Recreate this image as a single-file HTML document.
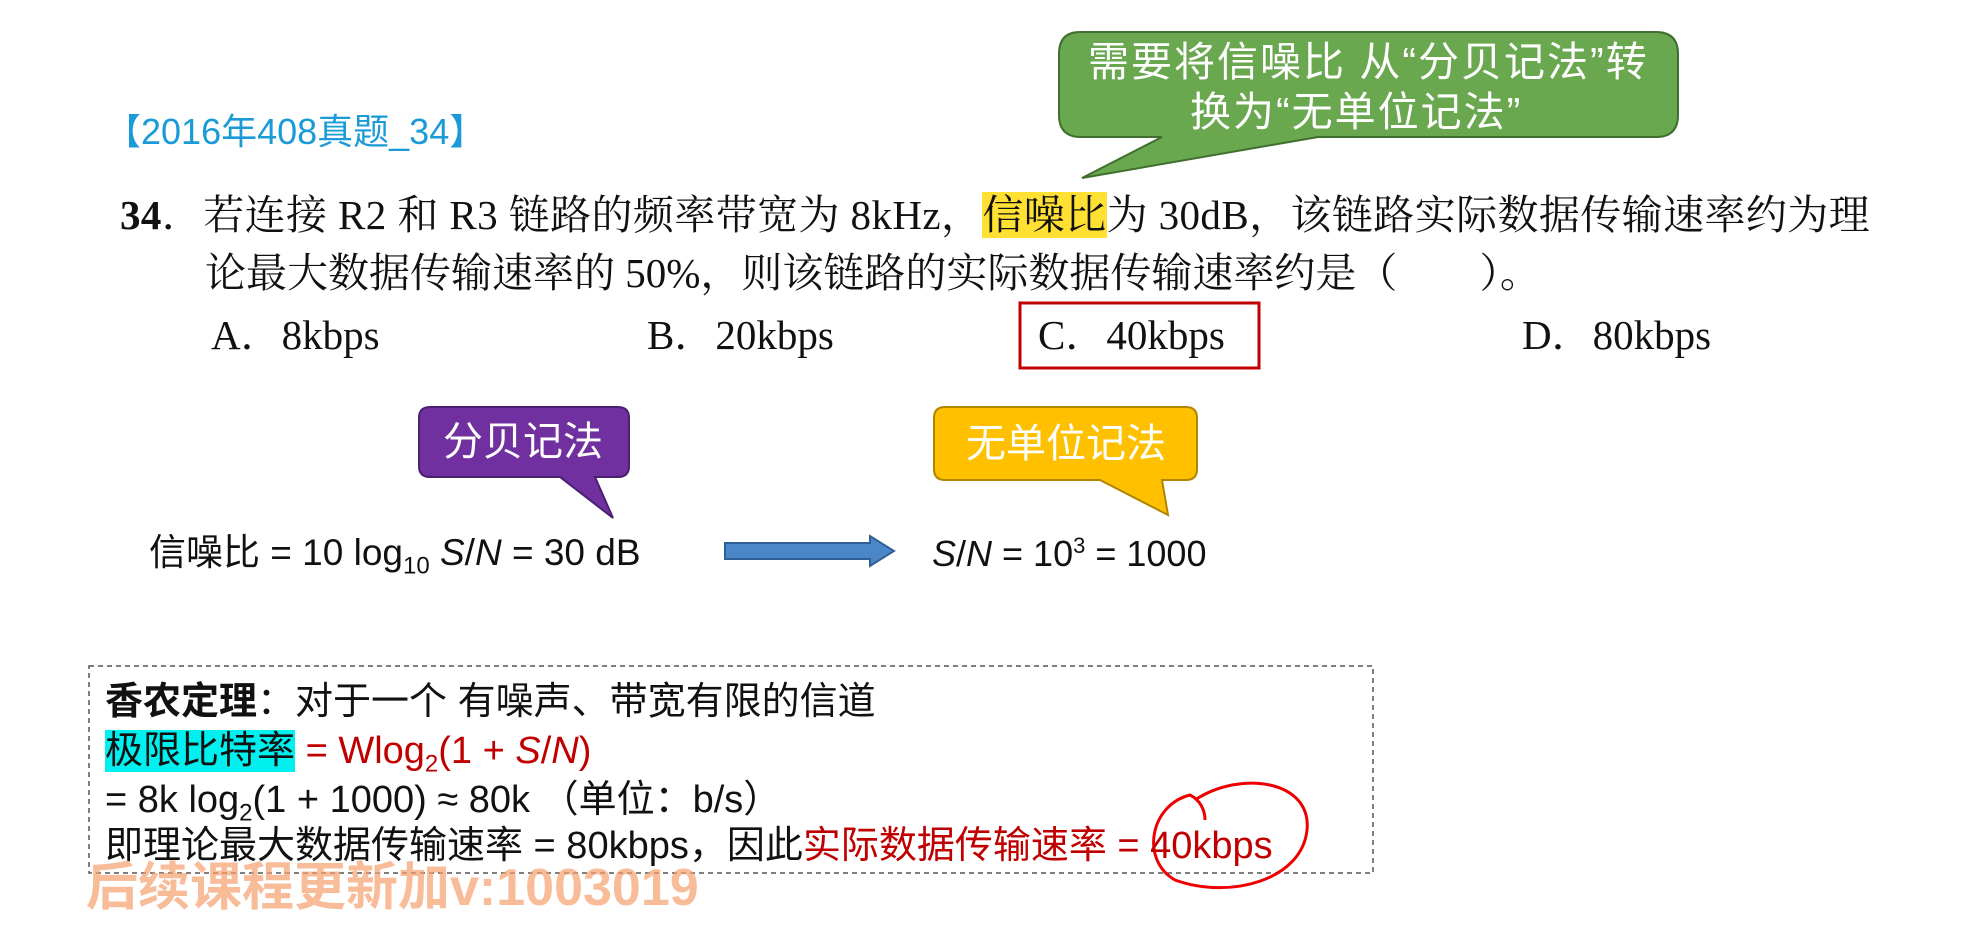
<!DOCTYPE html>
<html><head><meta charset="utf-8"><style>
body{margin:0;width:1981px;height:939px;background:#fff;position:relative;overflow:hidden}
.a{position:absolute;white-space:nowrap;line-height:1}
.q{font-family:"Liberation Serif","Noto Serif CJK SC",serif;font-size:41px;color:#111}
.s{font-family:"Liberation Sans","Noto Sans CJK SC",sans-serif;font-size:38px;color:#111}
.r{color:#c00000}
</style></head><body>
<svg class="a" style="left:0;top:0" width="1981" height="939">
<path d="M1080,32 H1656 Q1678,32 1678,54 V115 Q1678,137 1656,137 H1318 L1082,178 L1162,137 H1081 Q1059,137 1059,115 V54 Q1059,32 1080,32Z" fill="#6aa84f" stroke="#3f6f2e" stroke-width="2"/>
<path d="M430,407 H618 Q629,407 629,418 V466 Q629,477 618,477 H595 L613,518 L560,477 H430 Q419,477 419,466 V418 Q419,407 430,407Z" fill="#7030a0" stroke="#4a1f70" stroke-width="2"/>
<path d="M945,407 H1186 Q1197,407 1197,418 V469 Q1197,480 1186,480 H1162 L1168,515 L1100,480 H945 Q934,480 934,469 V418 Q934,407 945,407Z" fill="#ffc000" stroke="#b08600" stroke-width="2"/>
<path d="M725,543 H870 V536 L894,551 L870,566 V559 H725Z" fill="#4a86c8" stroke="#2f5f95" stroke-width="2"/>
<rect x="1020" y="303" width="239" height="65" fill="none" stroke="#c00000" stroke-width="3"/>
<rect x="89" y="666" width="1284" height="207" fill="none" stroke="#555" stroke-width="1.5" stroke-dasharray="5,4"/>
<path d="M1195,800 C1240,770 1312,780 1307,830 C1302,880 1230,900 1175,880 C1140,860 1150,805 1190,795 C1200,800 1205,810 1205,820" fill="none" stroke="#e00" stroke-width="3"/>
</svg>
<div class="a" style="left:1088px;top:42px;font-family:'Liberation Sans','Noto Sans CJK SC',sans-serif;font-size:41px;letter-spacing:2px;color:#fff">需要将信噪比 从“分贝记法”转</div>
<div class="a" style="left:1190px;top:92px;font-family:'Liberation Sans','Noto Sans CJK SC',sans-serif;font-size:41px;letter-spacing:2px;color:#fff">换为“无单位记法”</div>
<div class="a" style="left:105px;top:114px;font-family:'Liberation Sans','Noto Sans CJK SC',sans-serif;font-size:36px;color:#1a9bd7">【2016年408真题_34】</div>
<div class="a q" style="left:120px;top:195px;letter-spacing:0.4px"><b>34</b>．若连接 R2 和 R3 链路的频率带宽为 8kHz，<span style="background:#ffe033">信噪比</span>为 30dB，该链路实际数据传输速率约为理</div>
<div class="a q" style="left:205px;top:253px">论最大数据传输速率的 50%，则该链路的实际数据传输速率约是（　　）。</div>
<div class="a q" style="left:211px;top:315px">A．8kbps</div>
<div class="a q" style="left:647px;top:315px">B．20kbps</div>
<div class="a q" style="left:1038px;top:315px">C．40kbps</div>
<div class="a q" style="left:1522px;top:315px">D．80kbps</div>
<div class="a" style="left:443px;top:422px;font-family:'Liberation Sans','Noto Sans CJK SC',sans-serif;font-size:40px;color:#fff">分贝记法</div>
<div class="a" style="left:966px;top:424px;font-family:'Liberation Sans','Noto Sans CJK SC',sans-serif;font-size:40px;color:#fff">无单位记法</div>
<div class="a s" style="left:149px;top:534px;font-size:37px">信噪比 = 10 log<sub style="font-size:24px">10</sub> <i>S</i>/<i>N</i> = 30 dB</div>
<div class="a s" style="left:932px;top:535px;font-size:36px"><i>S</i>/<i>N</i> = 10<sup style="font-size:22px">3</sup> = 1000</div>
<div class="a s" style="left:105px;top:683px"><b>香农定理</b>：对于一个 有噪声、带宽有限的信道</div>
<div class="a s" style="left:105px;top:732px"><span style="background:#00f0f0">极限比特率</span><span class="r"> = Wlog<sub style="font-size:24px">2</sub>(1 + <i>S</i>/<i>N</i>)</span></div>
<div class="a s" style="left:105px;top:781px">= 8k log<sub style="font-size:24px">2</sub>(1 + 1000) ≈ 80k （单位：b/s）</div>
<div class="a s" style="left:105px;top:827px">即理论最大数据传输速率 = 80kbps，因此<span class="r">实际数据传输速率 = 40kbps</span></div>
<div class="a" style="left:86px;top:862px;font-family:'Liberation Sans','Noto Sans CJK SC',sans-serif;font-size:52px;font-weight:bold;color:rgba(245,160,110,0.7)">后续课程更新加v:1003019</div>
</body></html>
